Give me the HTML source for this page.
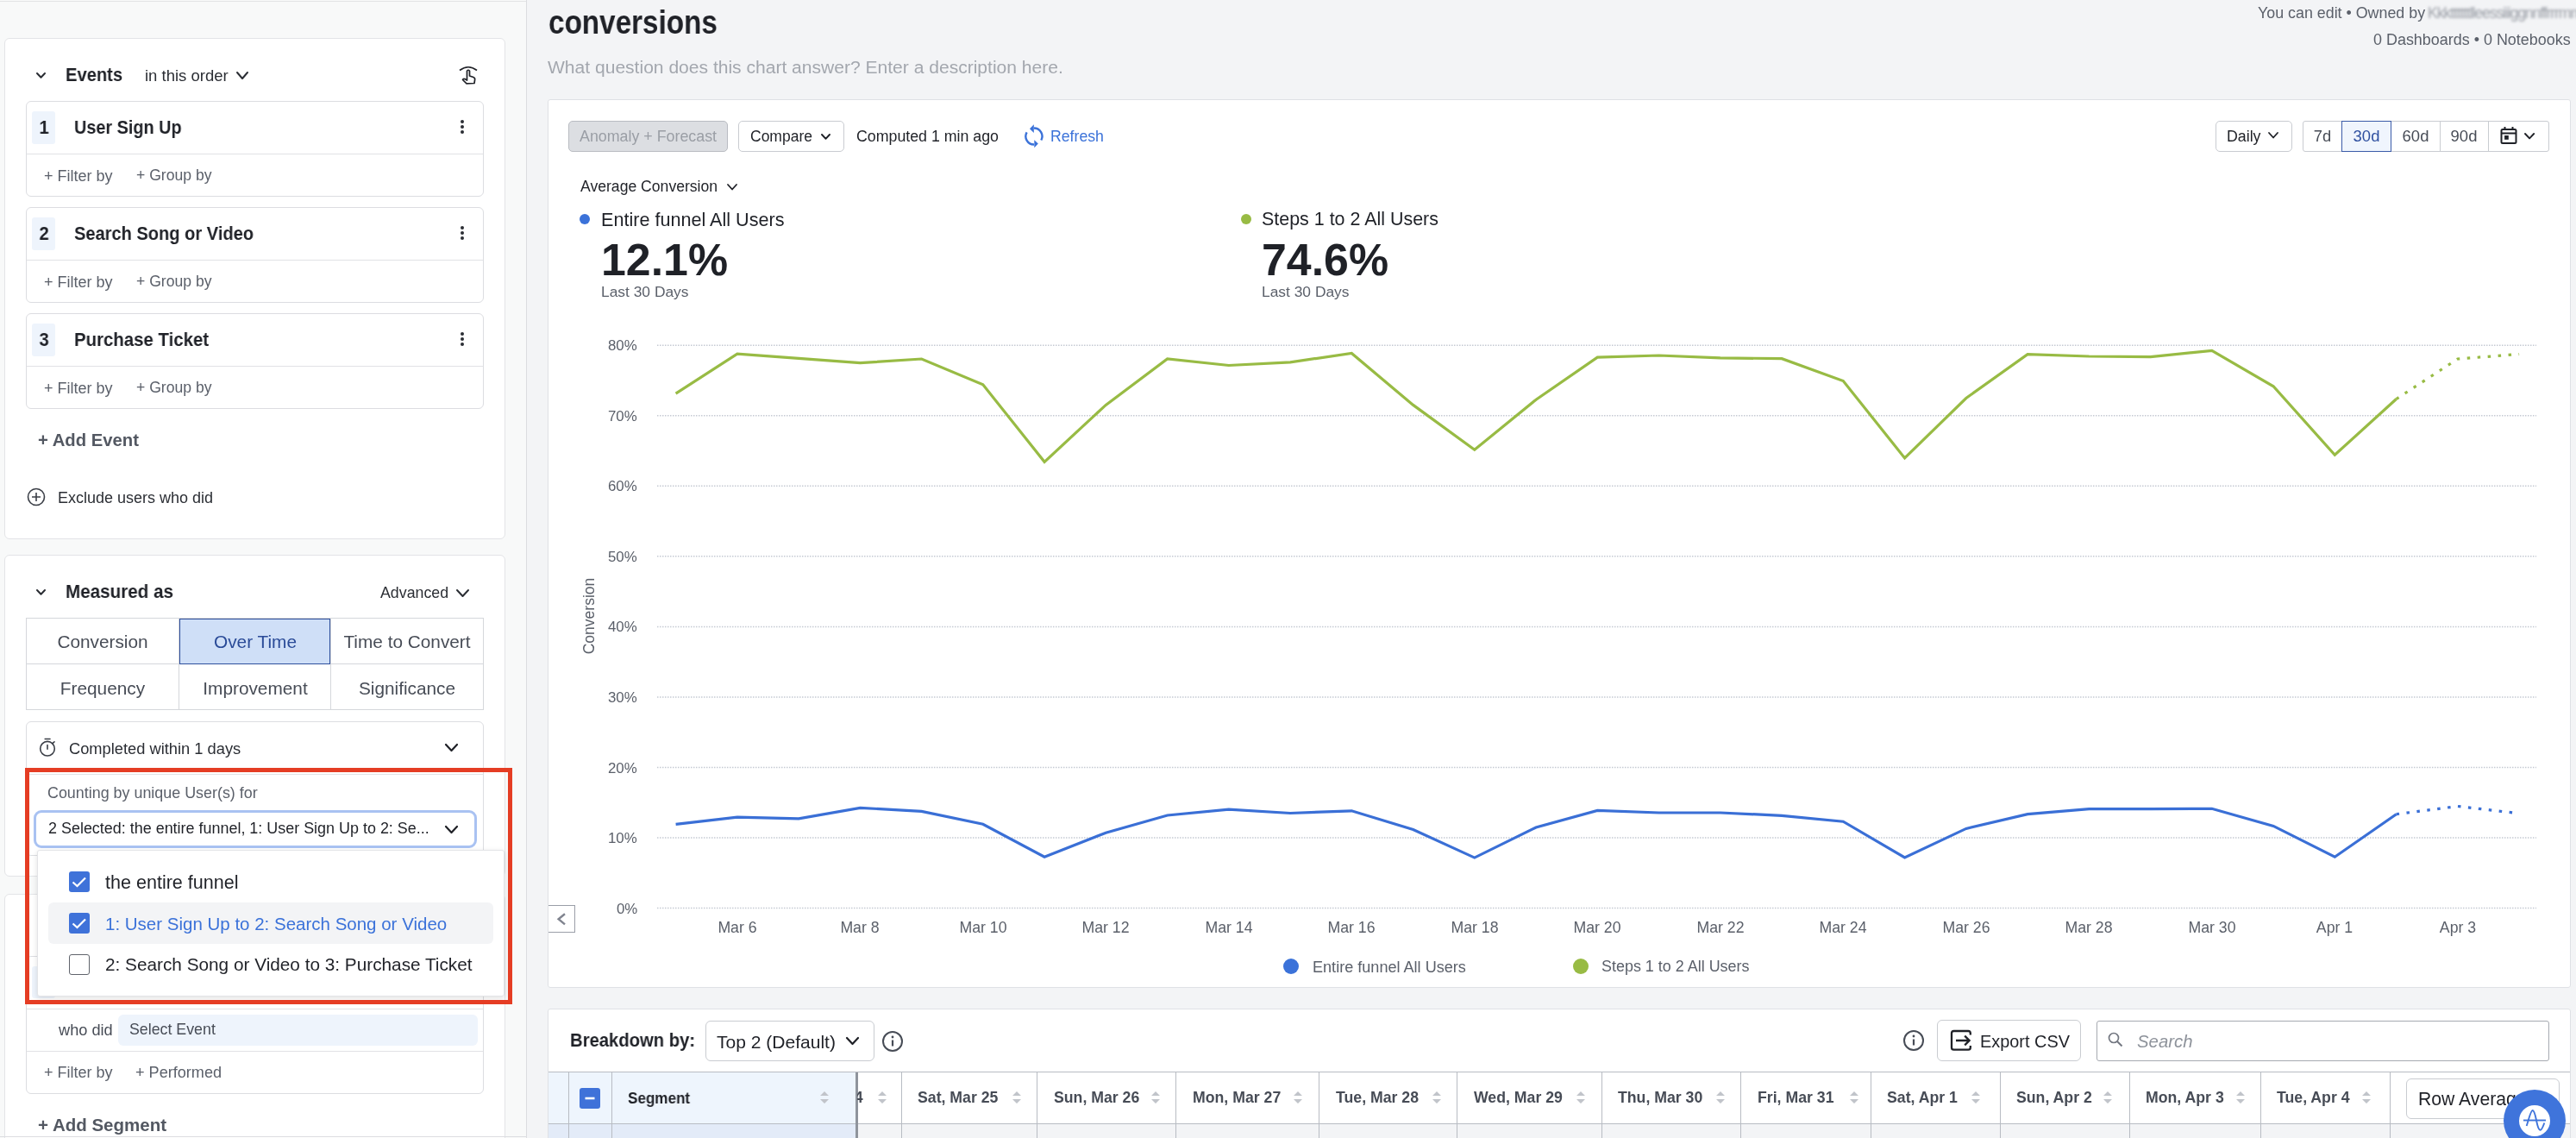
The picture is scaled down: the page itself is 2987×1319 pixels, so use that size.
<!DOCTYPE html><html><head><meta charset="utf-8"><style>
html,body{margin:0;padding:0;}
body{width:2987px;height:1319px;overflow:hidden;position:relative;background:#f3f4f6;font-family:"Liberation Sans", sans-serif;}
.t{position:absolute;white-space:nowrap;will-change:transform;}
.b{position:absolute;box-sizing:border-box;}
</style></head><body>
<div class="b" style="left:0px;top:0px;width:611px;height:1319px;background:#f8f9f9;border-right:1px solid #dcdde0;"></div>
<div class="b" style="left:0px;top:1px;width:610px;height:1px;background:#e2e3e5;"></div>
<div class="b" style="left:5px;top:44px;width:581px;height:581px;background:#fff;border:1px solid #e3e4e7;border-radius:6px;"></div>
<svg class="b" style="left:41.0px;top:82.6px" width="13" height="8.8" viewBox="0 0 13 8.8"><path d="M2 2 L6.5 6.8 L11 2" fill="none" stroke="#2b2e34" stroke-width="2" stroke-linecap="round" stroke-linejoin="round"/></svg>
<div class="t" style="left:76.0px;top:75.7px;font-size:22px;line-height:22px;color:#1f2127;font-weight:bold;transform:scaleX(0.915);transform-origin:0 0;">Events</div>
<div class="t" style="left:168.0px;top:78.6px;font-size:18.5px;line-height:18.5px;color:#2b2e34;">in this order</div>
<svg class="b" style="left:272.5px;top:81.5px" width="16" height="11" viewBox="0 0 16 11"><path d="M2 2 L8.0 9 L14 2" fill="none" stroke="#2b2e34" stroke-width="2" stroke-linecap="round" stroke-linejoin="round"/></svg>
<svg class="b" style="left:530px;top:73px" width="26" height="28" viewBox="0 0 26 28"><path d="M3 8.5 Q13 1 23 8.5" fill="none" stroke="#1f2127" stroke-width="1.6"/><path d="M11.5 20 L11.5 9.2 Q13 7.3 14.5 9.2 L14.5 15 L19 16.5 Q21 17.3 20.6 19.5 L20 23.5 L11 23.8 L6.5 19.5 Q7 18 9 18.6 Z" fill="#fff" stroke="#1f2127" stroke-width="1.7" stroke-linejoin="round"/></svg>
<div class="b" style="left:30px;top:117px;width:531px;height:111px;background:#fff;border:1px solid #dcdde1;border-radius:6px;"></div>
<div class="b" style="left:31px;top:178px;width:529px;height:1px;background:#e1e2e5;"></div>
<div class="b" style="left:37px;top:129px;width:27px;height:38px;background:#eef4fc;border-radius:3px;"></div>
<div class="t" style="left:-249.5px;width:600px;text-align:center;top:137.2px;font-size:22px;line-height:22px;color:#1f2127;font-weight:bold;transform:scaleX(0.92);transform-origin:50% 0;">1</div>
<div class="t" style="left:86.4px;top:136.8px;font-size:22.5px;line-height:22.5px;color:#1f2127;font-weight:bold;transform:scaleX(0.882);transform-origin:0 0;">User Sign Up</div>
<div class="b" style="left:534px;top:139px;width:4px;height:4px;border-radius:2px;background:#2b2e34"></div>
<div class="b" style="left:534px;top:145px;width:4px;height:4px;border-radius:2px;background:#2b2e34"></div>
<div class="b" style="left:534px;top:151px;width:4px;height:4px;border-radius:2px;background:#2b2e34"></div>
<div class="t" style="left:50.5px;top:194.6px;font-size:18px;line-height:18px;color:#5b606a;">+ Filter by</div>
<div class="t" style="left:157.5px;top:194.9px;font-size:17.6px;line-height:17.6px;color:#5b606a;">+ Group by</div>
<div class="b" style="left:30px;top:240px;width:531px;height:111px;background:#fff;border:1px solid #dcdde1;border-radius:6px;"></div>
<div class="b" style="left:31px;top:301px;width:529px;height:1px;background:#e1e2e5;"></div>
<div class="b" style="left:37px;top:252px;width:27px;height:38px;background:#eef4fc;border-radius:3px;"></div>
<div class="t" style="left:-249.5px;width:600px;text-align:center;top:260.2px;font-size:22px;line-height:22px;color:#1f2127;font-weight:bold;transform:scaleX(0.92);transform-origin:50% 0;">2</div>
<div class="t" style="left:86.4px;top:259.8px;font-size:22.5px;line-height:22.5px;color:#1f2127;font-weight:bold;transform:scaleX(0.891);transform-origin:0 0;">Search Song or Video</div>
<div class="b" style="left:534px;top:262px;width:4px;height:4px;border-radius:2px;background:#2b2e34"></div>
<div class="b" style="left:534px;top:268px;width:4px;height:4px;border-radius:2px;background:#2b2e34"></div>
<div class="b" style="left:534px;top:274px;width:4px;height:4px;border-radius:2px;background:#2b2e34"></div>
<div class="t" style="left:50.5px;top:317.6px;font-size:18px;line-height:18px;color:#5b606a;">+ Filter by</div>
<div class="t" style="left:157.5px;top:317.9px;font-size:17.6px;line-height:17.6px;color:#5b606a;">+ Group by</div>
<div class="b" style="left:30px;top:363px;width:531px;height:111px;background:#fff;border:1px solid #dcdde1;border-radius:6px;"></div>
<div class="b" style="left:31px;top:424px;width:529px;height:1px;background:#e1e2e5;"></div>
<div class="b" style="left:37px;top:375px;width:27px;height:38px;background:#eef4fc;border-radius:3px;"></div>
<div class="t" style="left:-249.5px;width:600px;text-align:center;top:383.2px;font-size:22px;line-height:22px;color:#1f2127;font-weight:bold;transform:scaleX(0.92);transform-origin:50% 0;">3</div>
<div class="t" style="left:86.4px;top:382.8px;font-size:22.5px;line-height:22.5px;color:#1f2127;font-weight:bold;transform:scaleX(0.906);transform-origin:0 0;">Purchase Ticket</div>
<div class="b" style="left:534px;top:385px;width:4px;height:4px;border-radius:2px;background:#2b2e34"></div>
<div class="b" style="left:534px;top:391px;width:4px;height:4px;border-radius:2px;background:#2b2e34"></div>
<div class="b" style="left:534px;top:397px;width:4px;height:4px;border-radius:2px;background:#2b2e34"></div>
<div class="t" style="left:50.5px;top:440.6px;font-size:18px;line-height:18px;color:#5b606a;">+ Filter by</div>
<div class="t" style="left:157.5px;top:440.9px;font-size:17.6px;line-height:17.6px;color:#5b606a;">+ Group by</div>
<div class="t" style="left:44.0px;top:499.6px;font-size:20.3px;line-height:20.3px;color:#535862;font-weight:bold;">+ Add Event</div>
<svg class="b" style="left:30px;top:564px" width="24" height="24" viewBox="0 0 24 24"><circle cx="12" cy="12" r="9.5" fill="none" stroke="#3a3e46" stroke-width="1.6"/><path d="M12 7v10M7 12h10" stroke="#3a3e46" stroke-width="1.6"/></svg>
<div class="t" style="left:67.4px;top:567.8px;font-size:18px;line-height:18px;color:#2b2e34;">Exclude users who did</div>
<div class="b" style="left:5px;top:643px;width:581px;height:373px;background:#fff;border:1px solid #e3e4e7;border-radius:6px;"></div>
<svg class="b" style="left:41.0px;top:681.6px" width="13" height="8.8" viewBox="0 0 13 8.8"><path d="M2 2 L6.5 6.8 L11 2" fill="none" stroke="#2b2e34" stroke-width="2" stroke-linecap="round" stroke-linejoin="round"/></svg>
<div class="t" style="left:76.2px;top:675.3px;font-size:22.5px;line-height:22.5px;color:#1f2127;font-weight:bold;transform:scaleX(0.917);transform-origin:0 0;">Measured as</div>
<div class="t" style="left:441.3px;top:679.2px;font-size:17.8px;line-height:17.8px;color:#2b2e34;">Advanced</div>
<svg class="b" style="left:528.0px;top:681.5px" width="17" height="11" viewBox="0 0 17 11"><path d="M2 2 L8.5 9 L15 2" fill="none" stroke="#2b2e34" stroke-width="2" stroke-linecap="round" stroke-linejoin="round"/></svg>
<div class="b" style="left:30px;top:716px;width:531px;height:107px;background:#fff;border:1px solid #d5d7db;"></div>
<div class="b" style="left:31px;top:769px;width:529px;height:1px;background:#d5d7db;"></div>
<div class="b" style="left:207px;top:717px;width:1px;height:105px;background:#d5d7db;"></div>
<div class="b" style="left:383px;top:717px;width:1px;height:105px;background:#d5d7db;"></div>
<div class="b" style="left:208px;top:717px;width:175px;height:53px;background:#cfdff7;border:1px solid #2e4f9c;"></div>
<div class="t" style="left:-181.0px;width:600px;text-align:center;top:734.2px;font-size:20.8px;line-height:20.8px;color:#474c56;">Conversion</div>
<div class="t" style="left:-4.5px;width:600px;text-align:center;top:734.2px;font-size:20.8px;line-height:20.8px;color:#2a4b98;">Over Time</div>
<div class="t" style="left:172.0px;width:600px;text-align:center;top:734.2px;font-size:20.8px;line-height:20.8px;color:#474c56;">Time to Convert</div>
<div class="t" style="left:-181.0px;width:600px;text-align:center;top:787.7px;font-size:20.8px;line-height:20.8px;color:#474c56;">Frequency</div>
<div class="t" style="left:-4.5px;width:600px;text-align:center;top:787.7px;font-size:20.8px;line-height:20.8px;color:#474c56;">Improvement</div>
<div class="t" style="left:172.0px;width:600px;text-align:center;top:787.7px;font-size:20.8px;line-height:20.8px;color:#474c56;">Significance</div>
<div class="b" style="left:30px;top:836px;width:531px;height:156px;background:#fff;border:1px solid #dcdde1;border-radius:6px;"></div>
<div class="b" style="left:31px;top:897px;width:529px;height:1px;background:#e1e2e5;"></div>
<svg class="b" style="left:44px;top:855px" width="24" height="26" viewBox="0 0 24 26"><circle cx="11" cy="12.7" r="8.3" fill="none" stroke="#3a3e46" stroke-width="1.6"/><path d="M8.2 1.5h5.8M11 8.5v4.8M16.6 6.8L19 4.8" stroke="#3a3e46" stroke-width="1.6" stroke-linecap="round"/></svg>
<div class="t" style="left:80.4px;top:859.3px;font-size:18.3px;line-height:18.3px;color:#2b2e34;">Completed within 1 days</div>
<svg class="b" style="left:514.5px;top:861.0px" width="17" height="11" viewBox="0 0 17 11"><path d="M2 2 L8.5 9 L15 2" fill="none" stroke="#1f2127" stroke-width="2.2" stroke-linecap="round" stroke-linejoin="round"/></svg>
<div class="t" style="left:55.4px;top:911.1px;font-size:17.9px;line-height:17.9px;color:#5b606a;">Counting by unique User(s) for</div>
<div class="b" style="left:39px;top:939px;width:514px;height:44px;background:#fff;border:3px solid #a9c2f2;border-radius:9px;"></div>
<div class="t" style="left:56.3px;top:952.1px;font-size:17.95px;line-height:17.95px;color:#1f2127;">2 Selected: the entire funnel, 1: User Sign Up to 2: Se...</div>
<svg class="b" style="left:514.5px;top:955.5px" width="17" height="11" viewBox="0 0 17 11"><path d="M2 2 L8.5 9 L15 2" fill="none" stroke="#1f2127" stroke-width="2.2" stroke-linecap="round" stroke-linejoin="round"/></svg>
<div class="b" style="left:5px;top:1036px;width:581px;height:294px;background:#fff;border:1px solid #e3e4e7;border-radius:6px;"></div>
<div class="b" style="left:30px;top:1108px;width:531px;height:160px;background:#fff;border:1px solid #dcdde1;border-radius:6px;"></div>
<div class="b" style="left:37px;top:1120px;width:27px;height:37px;background:#eef4fc;border-radius:3px;"></div>
<div class="b" style="left:31px;top:1169px;width:529px;height:1px;background:#e1e2e5;"></div>
<div class="b" style="left:31px;top:1218px;width:529px;height:1px;background:#e1e2e5;"></div>
<div class="b" style="left:137px;top:1176px;width:417px;height:36px;background:#eef4fc;border-radius:6px;"></div>
<div class="t" style="left:67.6px;top:1184.9px;font-size:18.2px;line-height:18.2px;color:#474c56;">who did</div>
<div class="t" style="left:150.3px;top:1185.2px;font-size:17.8px;line-height:17.8px;color:#474c56;">Select Event</div>
<div class="t" style="left:50.5px;top:1234.1px;font-size:18px;line-height:18px;color:#5b606a;">+ Filter by</div>
<div class="t" style="left:157.0px;top:1234.0px;font-size:18.1px;line-height:18.1px;color:#5b606a;">+ Performed</div>
<div class="t" style="left:44.0px;top:1293.5px;font-size:20.5px;line-height:20.5px;color:#535862;font-weight:bold;">+ Add Segment</div>
<div class="b" style="left:0px;top:1317px;width:610px;height:1px;background:#dcdde0;"></div>
<div class="b" style="left:43px;top:985px;width:542px;height:170px;background:#fff;border:1px solid #e3e4e7;border-radius:3px;box-shadow:0 2px 6px rgba(0,0,0,0.12);"></div>
<div class="b" style="left:56px;top:1046px;width:516px;height:48px;background:#f3f4f6;border-radius:6px;"></div>
<svg class="b" style="left:80px;top:1010px" width="24" height="24" viewBox="0 0 24 24"><rect x="0" y="0" width="24" height="24" rx="3" fill="#3f72d9"/><path d="M4.5 12.5 L9.5 17 L19 7.5" fill="none" stroke="#fff" stroke-width="2.2"/></svg>
<svg class="b" style="left:80px;top:1058px" width="24" height="24" viewBox="0 0 24 24"><rect x="0" y="0" width="24" height="24" rx="3" fill="#3f72d9"/><path d="M4.5 12.5 L9.5 17 L19 7.5" fill="none" stroke="#fff" stroke-width="2.2"/></svg>
<div class="b" style="left:80px;top:1106px;width:24px;height:24px;background:#fff;border:1.3px solid #60646c;border-radius:3px;"></div>
<div class="t" style="left:122.4px;top:1011.6px;font-size:21.56px;line-height:21.56px;color:#1f2127;">the entire funnel</div>
<div class="t" style="left:122.4px;top:1060.5px;font-size:20.5px;line-height:20.5px;color:#3b72d9;">1: User Sign Up to 2: Search Song or Video</div>
<div class="t" style="left:122.4px;top:1108.3px;font-size:20.78px;line-height:20.78px;color:#1f2127;">2: Search Song or Video to 3: Purchase Ticket</div>
<div class="b" style="left:29px;top:890px;width:565px;height:274px;border:5px solid #e53d24;"></div>
<div class="t" style="left:636.0px;top:6.7px;font-size:38px;line-height:38px;color:#1f2127;font-weight:bold;transform:scaleX(0.875);transform-origin:0 0;">conversions</div>
<div class="t" style="left:635.0px;top:66.5px;font-size:21.05px;line-height:21.05px;color:#a3a7ae;">What question does this chart answer? Enter a description here.</div>
<div class="t" style="left:2618.0px;top:7.4px;font-size:17.85px;line-height:17.85px;color:#5b606a;">You can edit • Owned by</div>
<div class="t" style="left:2815.0px;top:7.4px;font-size:17.85px;line-height:17.85px;color:#9a9ea6;filter:blur(1.4px);letter-spacing:-1.2px;">Kkkttttttlleessiiiggnnffrrrmmnntttt</div>
<div class="t" style="right:6.3px;top:37.7px;font-size:17.97px;line-height:17.97px;color:#5b606a;">0 Dashboards • 0 Notebooks</div>
<div class="b" style="left:635px;top:115px;width:2346px;height:1030px;background:#fff;border:1px solid #dfe1e5;border-radius:3px;"></div>
<div class="b" style="left:659px;top:140px;width:185px;height:36px;background:#dcdee2;border:1px solid #b9bcc2;border-radius:5px;"></div>
<div class="t" style="left:672.0px;top:150.0px;font-size:17.83px;line-height:17.83px;color:#9a9ea5;">Anomaly + Forecast</div>
<div class="b" style="left:856px;top:140px;width:123px;height:36px;background:#fff;border:1px solid #c9ccd1;border-radius:5px;"></div>
<div class="t" style="left:869.8px;top:150.3px;font-size:17.5px;line-height:17.5px;color:#1f2127;">Compare</div>
<svg class="b" style="left:950.9px;top:153.6px" width="13" height="8.8" viewBox="0 0 13 8.8"><path d="M2 2 L6.5 6.8 L11 2" fill="none" stroke="#1f2127" stroke-width="1.9" stroke-linecap="round" stroke-linejoin="round"/></svg>
<div class="t" style="left:992.7px;top:150.0px;font-size:17.78px;line-height:17.78px;color:#1f2127;">Computed 1 min ago</div>
<svg class="b" style="left:1186px;top:143px" width="26" height="32" viewBox="0 0 26 32"><path d="M13 5.5 A9.5 9.5 0 0 1 21.3 19.5" fill="none" stroke="#3b72d9" stroke-width="2.4"/><path d="M8 6.2 L12.8 1.2 L12.8 11 Z" fill="#3b72d9"/><path d="M13 24.5 A9.5 9.5 0 0 1 4.6 10.3" fill="none" stroke="#3b72d9" stroke-width="2.4"/><path d="M17.8 23.6 L13.3 19.2 L13.3 28.2 Z" fill="#3b72d9"/></svg>
<div class="t" style="left:1218.0px;top:150.1px;font-size:17.7px;line-height:17.7px;color:#3b72d9;">Refresh</div>
<div class="b" style="left:2569px;top:140px;width:89px;height:36px;background:#fff;border:1px solid #c9ccd1;border-radius:5px;"></div>
<div class="t" style="left:2582.0px;top:150.1px;font-size:17.77px;line-height:17.77px;color:#1f2127;">Daily</div>
<svg class="b" style="left:2629.3px;top:152.25px" width="14" height="9.5" viewBox="0 0 14 9.5"><path d="M2 2 L7.0 7.5 L12 2" fill="none" stroke="#1f2127" stroke-width="1.8" stroke-linecap="round" stroke-linejoin="round"/></svg>
<div class="b" style="left:2670px;top:140px;width:286px;height:36px;background:#fff;border:1px solid #c9ccd1;border-radius:3px;"></div>
<div class="b" style="left:2715px;top:141px;width:1px;height:34px;background:#c9ccd1;"></div>
<div class="b" style="left:2772px;top:141px;width:1px;height:34px;background:#c9ccd1;"></div>
<div class="b" style="left:2829px;top:141px;width:1px;height:34px;background:#c9ccd1;"></div>
<div class="b" style="left:2885px;top:141px;width:1px;height:34px;background:#c9ccd1;"></div>
<div class="b" style="left:2715px;top:140px;width:58px;height:36px;background:#f0f5fd;border:1.5px solid #3b5ba8;"></div>
<div class="t" style="left:2393.0px;width:600px;text-align:center;top:148.7px;font-size:18.4px;line-height:18.4px;color:#474c56;">7d</div>
<div class="t" style="left:2444.0px;width:600px;text-align:center;top:148.6px;font-size:18.5px;line-height:18.5px;color:#2f50a0;">30d</div>
<div class="t" style="left:2500.5px;width:600px;text-align:center;top:148.6px;font-size:18.5px;line-height:18.5px;color:#474c56;">60d</div>
<div class="t" style="left:2557.0px;width:600px;text-align:center;top:148.6px;font-size:18.5px;line-height:18.5px;color:#474c56;">90d</div>
<svg class="b" style="left:2899px;top:146px" width="20" height="22" viewBox="0 0 20 22"><rect x="1.5" y="4" width="17" height="16" rx="1.5" fill="none" stroke="#1f2127" stroke-width="2"/><path d="M1.5 8.5h17" stroke="#1f2127" stroke-width="2"/><path d="M5.5 1v4M14.5 1v4" stroke="#1f2127" stroke-width="2"/><rect x="5.1" y="11" width="4.7" height="4.8" fill="#1f2127"/></svg>
<svg class="b" style="left:2926.3px;top:153.3px" width="14.2" height="9.4" viewBox="0 0 14.2 9.4"><path d="M2 2 L7.1 7.4 L12.2 2" fill="none" stroke="#1f2127" stroke-width="1.9" stroke-linecap="round" stroke-linejoin="round"/></svg>
<div class="t" style="left:673.0px;top:208.4px;font-size:17.6px;line-height:17.6px;color:#1f2127;">Average Conversion</div>
<svg class="b" style="left:841.5px;top:212.25px" width="14" height="9.5" viewBox="0 0 14 9.5"><path d="M2 2 L7.0 7.5 L12 2" fill="none" stroke="#1f2127" stroke-width="1.8" stroke-linecap="round" stroke-linejoin="round"/></svg>
<div class="b" style="left:672px;top:248px;width:12px;height:12px;border-radius:6px;background:#3b72d9"></div>
<div class="t" style="left:697.0px;top:244.1px;font-size:21.6px;line-height:21.6px;color:#1f2127;">Entire funnel All Users</div>
<div class="t" style="left:697.0px;top:275.8px;font-size:51.85px;line-height:51.85px;color:#1f2127;font-weight:bold;">12.1%</div>
<div class="t" style="left:697.0px;top:330.0px;font-size:17.4px;line-height:17.4px;color:#5b606a;">Last 30 Days</div>
<div class="b" style="left:1439px;top:248px;width:12px;height:12px;border-radius:6px;background:#98bb44"></div>
<div class="t" style="left:1463.0px;top:244.2px;font-size:21.44px;line-height:21.44px;color:#1f2127;">Steps 1 to 2 All Users</div>
<div class="t" style="left:1463.0px;top:275.8px;font-size:51.85px;line-height:51.85px;color:#1f2127;font-weight:bold;">74.6%</div>
<div class="t" style="left:1463.0px;top:330.0px;font-size:17.4px;line-height:17.4px;color:#5b606a;">Last 30 Days</div>
<svg class="b" style="left:0;top:0" width="2987" height="1319" viewBox="0 0 2987 1319"><line x1="762" y1="1052.6" x2="2941" y2="1052.6" stroke="#c5cad3" stroke-width="1.5" stroke-dasharray="1.5 1.5"/><line x1="762" y1="971.05" x2="2941" y2="971.05" stroke="#c5cad3" stroke-width="1.5" stroke-dasharray="1.5 1.5"/><line x1="762" y1="889.4999999999999" x2="2941" y2="889.4999999999999" stroke="#c5cad3" stroke-width="1.5" stroke-dasharray="1.5 1.5"/><line x1="762" y1="807.9499999999999" x2="2941" y2="807.9499999999999" stroke="#c5cad3" stroke-width="1.5" stroke-dasharray="1.5 1.5"/><line x1="762" y1="726.3999999999999" x2="2941" y2="726.3999999999999" stroke="#c5cad3" stroke-width="1.5" stroke-dasharray="1.5 1.5"/><line x1="762" y1="644.8499999999999" x2="2941" y2="644.8499999999999" stroke="#c5cad3" stroke-width="1.5" stroke-dasharray="1.5 1.5"/><line x1="762" y1="563.3" x2="2941" y2="563.3" stroke="#c5cad3" stroke-width="1.5" stroke-dasharray="1.5 1.5"/><line x1="762" y1="481.7499999999999" x2="2941" y2="481.7499999999999" stroke="#c5cad3" stroke-width="1.5" stroke-dasharray="1.5 1.5"/><line x1="762" y1="400.19999999999993" x2="2941" y2="400.19999999999993" stroke="#c5cad3" stroke-width="1.5" stroke-dasharray="1.5 1.5"/><polyline points="783.6,456.1 854.9,410.1 926.1,415.4 997.4,420.7 1068.6,416.0 1139.8,445.8 1211.1,535.3 1282.3,469.4 1353.6,416.0 1424.8,423.5 1496.1,419.8 1567.3,409.5 1638.6,469.4 1709.8,521.3 1781.1,463.2 1852.3,414.2 1923.6,412.0 1994.8,414.8 2066.1,415.7 2137.3,441.5 2208.6,530.9 2279.8,461.5 2351.1,410.6 2422.3,413.0 2493.6,413.6 2564.8,406.3 2636.1,447.8 2707.3,527.3 2778.6,462.5" fill="none" stroke="#98bb44" stroke-width="3.2" stroke-linejoin="miter"/><polyline points="2778.6,462.5 2849.8,416.0 2921.1,410.5" fill="none" stroke="#98bb44" stroke-width="3.2" stroke-dasharray="3.5 8.5"/><polyline points="783.6,955.3 854.9,947.2 926.1,948.8 997.4,936.3 1068.6,940.4 1139.8,955.3 1211.1,993.2 1282.3,965.2 1353.6,945.0 1424.8,938.2 1496.1,942.5 1567.3,939.8 1638.6,961.5 1709.8,994.1 1781.1,959.0 1852.3,939.4 1923.6,942.0 1994.8,942.0 2066.1,945.3 2137.3,952.2 2208.6,994.0 2279.8,960.4 2351.1,943.7 2422.3,937.6 2493.6,937.6 2564.8,937.3 2636.1,957.4 2707.3,993.2 2778.6,943.7" fill="none" stroke="#3a6fd6" stroke-width="3.2" stroke-linejoin="miter"/><polyline points="2778.6,943.7 2849.8,934.5 2921.1,942.8" fill="none" stroke="#3a6fd6" stroke-width="3.2" stroke-dasharray="3.5 8.5"/></svg>
<div class="t" style="right:2248.0px;top:1045.6px;font-size:16.85px;line-height:16.85px;color:#5b606a;">0%</div>
<div class="t" style="right:2248.0px;top:964.1px;font-size:16.85px;line-height:16.85px;color:#5b606a;">10%</div>
<div class="t" style="right:2248.0px;top:882.5px;font-size:16.85px;line-height:16.85px;color:#5b606a;">20%</div>
<div class="t" style="right:2248.0px;top:801.0px;font-size:16.85px;line-height:16.85px;color:#5b606a;">30%</div>
<div class="t" style="right:2248.0px;top:719.4px;font-size:16.85px;line-height:16.85px;color:#5b606a;">40%</div>
<div class="t" style="right:2248.0px;top:637.9px;font-size:16.85px;line-height:16.85px;color:#5b606a;">50%</div>
<div class="t" style="right:2248.0px;top:556.3px;font-size:16.85px;line-height:16.85px;color:#5b606a;">60%</div>
<div class="t" style="right:2248.0px;top:474.8px;font-size:16.85px;line-height:16.85px;color:#5b606a;">70%</div>
<div class="t" style="right:2248.0px;top:393.2px;font-size:16.85px;line-height:16.85px;color:#5b606a;">80%</div>
<div class="t" style="left:623px;top:704.5px;width:120px;text-align:center;font-size:17.5px;line-height:18px;color:#5b606a;transform:rotate(-90deg);transform-origin:50% 50%;">Conversion</div>
<div class="t" style="left:554.9px;width:600px;text-align:center;top:1067.0px;font-size:17.7px;line-height:17.7px;color:#5b606a;">Mar 6</div>
<div class="t" style="left:697.4px;width:600px;text-align:center;top:1067.0px;font-size:17.7px;line-height:17.7px;color:#5b606a;">Mar 8</div>
<div class="t" style="left:839.8px;width:600px;text-align:center;top:1067.0px;font-size:17.7px;line-height:17.7px;color:#5b606a;">Mar 10</div>
<div class="t" style="left:982.3px;width:600px;text-align:center;top:1067.0px;font-size:17.7px;line-height:17.7px;color:#5b606a;">Mar 12</div>
<div class="t" style="left:1124.8px;width:600px;text-align:center;top:1067.0px;font-size:17.7px;line-height:17.7px;color:#5b606a;">Mar 14</div>
<div class="t" style="left:1267.3px;width:600px;text-align:center;top:1067.0px;font-size:17.7px;line-height:17.7px;color:#5b606a;">Mar 16</div>
<div class="t" style="left:1409.8px;width:600px;text-align:center;top:1067.0px;font-size:17.7px;line-height:17.7px;color:#5b606a;">Mar 18</div>
<div class="t" style="left:1552.3px;width:600px;text-align:center;top:1067.0px;font-size:17.7px;line-height:17.7px;color:#5b606a;">Mar 20</div>
<div class="t" style="left:1694.8px;width:600px;text-align:center;top:1067.0px;font-size:17.7px;line-height:17.7px;color:#5b606a;">Mar 22</div>
<div class="t" style="left:1837.3px;width:600px;text-align:center;top:1067.0px;font-size:17.7px;line-height:17.7px;color:#5b606a;">Mar 24</div>
<div class="t" style="left:1979.8px;width:600px;text-align:center;top:1067.0px;font-size:17.7px;line-height:17.7px;color:#5b606a;">Mar 26</div>
<div class="t" style="left:2122.3px;width:600px;text-align:center;top:1067.0px;font-size:17.7px;line-height:17.7px;color:#5b606a;">Mar 28</div>
<div class="t" style="left:2264.8px;width:600px;text-align:center;top:1067.0px;font-size:17.7px;line-height:17.7px;color:#5b606a;">Mar 30</div>
<div class="t" style="left:2407.3px;width:600px;text-align:center;top:1067.0px;font-size:17.7px;line-height:17.7px;color:#5b606a;">Apr 1</div>
<div class="t" style="left:2549.8px;width:600px;text-align:center;top:1067.0px;font-size:17.7px;line-height:17.7px;color:#5b606a;">Apr 3</div>
<div class="b" style="left:636px;top:1049px;width:31px;height:32px;background:#fff;border:1px solid #9a9ea8;border-left:none;"></div>
<svg class="b" style="left:645px;top:1057.5px" width="14" height="15" viewBox="0 0 14 15"><path d="M10 1.2 L2.6 7.3 L10 13.4" fill="none" stroke="#80848f" stroke-width="2.4"/></svg>
<div class="b" style="left:1488px;top:1111px;width:18px;height:18px;border-radius:9px;background:#3b72d9"></div>
<div class="t" style="left:1521.5px;top:1111.5px;font-size:18.09px;line-height:18.09px;color:#5b606a;">Entire funnel All Users</div>
<div class="b" style="left:1824px;top:1111px;width:18px;height:18px;border-radius:9px;background:#98bb44"></div>
<div class="t" style="left:1856.5px;top:1111.6px;font-size:17.94px;line-height:17.94px;color:#5b606a;">Steps 1 to 2 All Users</div>
<div class="b" style="left:635px;top:1169px;width:2346px;height:171px;background:#fff;border:1px solid #dfe1e5;border-radius:3px;"></div>
<div class="t" style="left:660.8px;top:1196.3px;font-size:21.3px;line-height:21.3px;color:#1f2127;font-weight:bold;transform:scaleX(0.95);transform-origin:0 0;">Breakdown by:</div>
<div class="b" style="left:818px;top:1182.5px;width:196px;height:47.5px;background:#fff;border:1px solid #c9ccd1;border-radius:6px;"></div>
<div class="t" style="left:831.4px;top:1196.5px;font-size:21.04px;line-height:21.04px;color:#1f2127;">Top 2 (Default)</div>
<svg class="b" style="left:980.0px;top:1200.5px" width="17" height="11" viewBox="0 0 17 11"><path d="M2 2 L8.5 9 L15 2" fill="none" stroke="#1f2127" stroke-width="2.2" stroke-linecap="round" stroke-linejoin="round"/></svg>
<svg class="b" style="left:1022px;top:1193.6px" width="26" height="26" viewBox="0 0 26 26"><circle cx="13" cy="13" r="11" fill="none" stroke="#474c56" stroke-width="2"/><path d="M13 11.5v7" stroke="#474c56" stroke-width="2.2"/><circle cx="13" cy="8" r="1.4" fill="#474c56"/></svg>
<svg class="b" style="left:2206px;top:1193px" width="26" height="26" viewBox="0 0 26 26"><circle cx="13" cy="13" r="11" fill="none" stroke="#474c56" stroke-width="2"/><path d="M13 11.5v7" stroke="#474c56" stroke-width="2.2"/><circle cx="13" cy="8" r="1.4" fill="#474c56"/></svg>
<div class="b" style="left:2246px;top:1182px;width:167px;height:48px;background:#fff;border:1px solid #c9ccd1;border-radius:6px;"></div>
<svg class="b" style="left:2261px;top:1193px" width="26" height="26" viewBox="0 0 26 26"><path d="M23.8 6.5 V4.5 Q23.8 2 21.3 2 H4.5 Q2 2 2 4.5 V21.3 Q2 23.7 4.5 23.7 H21.3 Q23.8 23.7 23.8 21.3 V19" fill="none" stroke="#1f2127" stroke-width="2.3"/><path d="M7 13 H23.2 M17.2 7.6 L22.6 13 L17.2 18.4" fill="none" stroke="#1f2127" stroke-width="2.3"/></svg>
<div class="t" style="left:2295.6px;top:1197.5px;font-size:19.9px;line-height:19.9px;color:#1f2127;">Export CSV</div>
<div class="b" style="left:2431px;top:1183px;width:525px;height:47px;background:#fff;border:1px solid #a6aab1;border-radius:3px;"></div>
<svg class="b" style="left:2443px;top:1195px" width="20" height="20" viewBox="0 0 20 20"><circle cx="8" cy="8" r="5.5" fill="none" stroke="#737781" stroke-width="1.7"/><path d="M12 12 L17.5 17.5" stroke="#737781" stroke-width="1.9"/></svg>
<div class="t" style="left:2478.0px;top:1197.1px;font-size:20.36px;line-height:20.36px;color:#8e939b;font-style:italic;">Search</div>
<div class="b" style="left:636px;top:1242px;width:2344px;height:1px;background:#b8bcc3;"></div>
<div class="b" style="left:636px;top:1243px;width:358px;height:59px;background:#eef5fd;"></div>
<div class="b" style="left:636px;top:1302px;width:2344px;height:1px;background:#b8bcc3;"></div>
<div class="b" style="left:636px;top:1303px;width:358px;height:27px;background:#e3ebf8;"></div>
<div class="b" style="left:994px;top:1303px;width:1986px;height:27px;background:#f3f4f6;"></div>
<div class="b" style="left:659px;top:1243px;width:1px;height:87px;background:#b8bcc3;"></div>
<div class="b" style="left:709px;top:1243px;width:1px;height:87px;background:#b8bcc3;"></div>
<div class="b" style="left:1045px;top:1243px;width:1px;height:87px;background:#b8bcc3;"></div>
<div class="b" style="left:1202px;top:1243px;width:1px;height:87px;background:#b8bcc3;"></div>
<div class="b" style="left:1363px;top:1243px;width:1px;height:87px;background:#b8bcc3;"></div>
<div class="b" style="left:1529px;top:1243px;width:1px;height:87px;background:#b8bcc3;"></div>
<div class="b" style="left:1689px;top:1243px;width:1px;height:87px;background:#b8bcc3;"></div>
<div class="b" style="left:1857px;top:1243px;width:1px;height:87px;background:#b8bcc3;"></div>
<div class="b" style="left:2018px;top:1243px;width:1px;height:87px;background:#b8bcc3;"></div>
<div class="b" style="left:2169px;top:1243px;width:1px;height:87px;background:#b8bcc3;"></div>
<div class="b" style="left:2319px;top:1243px;width:1px;height:87px;background:#b8bcc3;"></div>
<div class="b" style="left:2469px;top:1243px;width:1px;height:87px;background:#b8bcc3;"></div>
<div class="b" style="left:2621px;top:1243px;width:1px;height:87px;background:#b8bcc3;"></div>
<div class="b" style="left:2771px;top:1243px;width:1px;height:87px;background:#b8bcc3;"></div>
<div class="b" style="left:992px;top:1243px;width:3px;height:87px;background:#8f949c;"></div>
<svg class="b" style="left:672px;top:1261px" width="24" height="24" viewBox="0 0 24 24"><rect width="24" height="24" rx="3" fill="#3f72d9"/><path d="M6.5 12h11" stroke="#fff" stroke-width="2.6"/></svg>
<div class="t" style="left:728.0px;top:1264.5px;font-size:17.5px;line-height:17.5px;color:#1f2127;font-weight:bold;transform:scaleX(0.975);transform-origin:0 0;">Segment</div>
<svg class="b" style="left:950px;top:1263px" width="12" height="18" viewBox="0 0 12 18"><path d="M1 7 L6 2 L11 7 Z M1 11 L6 16 L11 11 Z" fill="#c1c4ca"/></svg>
<div class="b" style="left:994px;top:1243px;width:1986px;height:59px;overflow:hidden">
<div class="t" style="left:-82.5px;top:21.3px;font-size:17.7px;line-height:17.7px;color:#474c56;font-weight:bold;">Fri, Mar 24</div>
<div class="t" style="left:70.0px;top:21.3px;font-size:17.7px;line-height:17.7px;color:#474c56;font-weight:bold;">Sat, Mar 25</div>
<div class="t" style="left:227.5px;top:21.3px;font-size:17.7px;line-height:17.7px;color:#474c56;font-weight:bold;">Sun, Mar 26</div>
<div class="t" style="left:388.8px;top:21.3px;font-size:17.7px;line-height:17.7px;color:#474c56;font-weight:bold;">Mon, Mar 27</div>
<div class="t" style="left:555.0px;top:21.3px;font-size:17.7px;line-height:17.7px;color:#474c56;font-weight:bold;">Tue, Mar 28</div>
<div class="t" style="left:714.6px;top:21.3px;font-size:17.7px;line-height:17.7px;color:#474c56;font-weight:bold;">Wed, Mar 29</div>
<div class="t" style="left:882.0px;top:21.3px;font-size:17.7px;line-height:17.7px;color:#474c56;font-weight:bold;">Thu, Mar 30</div>
<div class="t" style="left:1043.6px;top:21.3px;font-size:17.7px;line-height:17.7px;color:#474c56;font-weight:bold;">Fri, Mar 31</div>
<div class="t" style="left:1193.8px;top:21.3px;font-size:17.7px;line-height:17.7px;color:#474c56;font-weight:bold;">Sat, Apr 1</div>
<div class="t" style="left:1343.6px;top:21.3px;font-size:17.7px;line-height:17.7px;color:#474c56;font-weight:bold;">Sun, Apr 2</div>
<div class="t" style="left:1494.0px;top:21.3px;font-size:17.7px;line-height:17.7px;color:#474c56;font-weight:bold;">Mon, Apr 3</div>
<div class="t" style="left:1646.0px;top:21.3px;font-size:17.7px;line-height:17.7px;color:#474c56;font-weight:bold;">Tue, Apr 4</div>
</div>
<svg class="b" style="left:1016.5px;top:1263px" width="12" height="18" viewBox="0 0 12 18"><path d="M1 7 L6 2 L11 7 Z M1 11 L6 16 L11 11 Z" fill="#c1c4ca"/></svg>
<svg class="b" style="left:1172.5px;top:1263px" width="12" height="18" viewBox="0 0 12 18"><path d="M1 7 L6 2 L11 7 Z M1 11 L6 16 L11 11 Z" fill="#c1c4ca"/></svg>
<svg class="b" style="left:1334px;top:1263px" width="12" height="18" viewBox="0 0 12 18"><path d="M1 7 L6 2 L11 7 Z M1 11 L6 16 L11 11 Z" fill="#c1c4ca"/></svg>
<svg class="b" style="left:1499px;top:1263px" width="12" height="18" viewBox="0 0 12 18"><path d="M1 7 L6 2 L11 7 Z M1 11 L6 16 L11 11 Z" fill="#c1c4ca"/></svg>
<svg class="b" style="left:1660px;top:1263px" width="12" height="18" viewBox="0 0 12 18"><path d="M1 7 L6 2 L11 7 Z M1 11 L6 16 L11 11 Z" fill="#c1c4ca"/></svg>
<svg class="b" style="left:1827.3px;top:1263px" width="12" height="18" viewBox="0 0 12 18"><path d="M1 7 L6 2 L11 7 Z M1 11 L6 16 L11 11 Z" fill="#c1c4ca"/></svg>
<svg class="b" style="left:1989px;top:1263px" width="12" height="18" viewBox="0 0 12 18"><path d="M1 7 L6 2 L11 7 Z M1 11 L6 16 L11 11 Z" fill="#c1c4ca"/></svg>
<svg class="b" style="left:2144px;top:1263px" width="12" height="18" viewBox="0 0 12 18"><path d="M1 7 L6 2 L11 7 Z M1 11 L6 16 L11 11 Z" fill="#c1c4ca"/></svg>
<svg class="b" style="left:2285px;top:1263px" width="12" height="18" viewBox="0 0 12 18"><path d="M1 7 L6 2 L11 7 Z M1 11 L6 16 L11 11 Z" fill="#c1c4ca"/></svg>
<svg class="b" style="left:2438px;top:1263px" width="12" height="18" viewBox="0 0 12 18"><path d="M1 7 L6 2 L11 7 Z M1 11 L6 16 L11 11 Z" fill="#c1c4ca"/></svg>
<svg class="b" style="left:2592px;top:1263px" width="12" height="18" viewBox="0 0 12 18"><path d="M1 7 L6 2 L11 7 Z M1 11 L6 16 L11 11 Z" fill="#c1c4ca"/></svg>
<svg class="b" style="left:2738px;top:1263px" width="12" height="18" viewBox="0 0 12 18"><path d="M1 7 L6 2 L11 7 Z M1 11 L6 16 L11 11 Z" fill="#c1c4ca"/></svg>
<div class="b" style="left:2790px;top:1249.5px;width:178px;height:47.5px;background:#fff;border:1px solid #c9ccd1;border-radius:6px;"></div>
<div class="t" style="left:2803.7px;top:1262.9px;font-size:21.2px;line-height:21.2px;color:#1f2127;">Row Average</div>
<svg class="b" style="left:2902px;top:1262px" width="74" height="74" viewBox="0 0 74 74"><defs><filter id="sh" x="-30%" y="-30%" width="160%" height="160%"><feGaussianBlur stdDeviation="0"/></filter></defs><circle cx="37" cy="37" r="36" fill="#3f74db"/><circle cx="37" cy="37" r="18" fill="#fff"/><path d="M24 36.5 H50" stroke="#3f74db" stroke-width="1.9"/><path d="M27.7 43 C30 36 32.5 25 34.7 25 C37.5 25 38.8 37 40.3 42 C41.5 46.5 42.5 47.8 43.6 47.8 C45.5 47.8 47 43 48.3 39.5" fill="none" stroke="#3f74db" stroke-width="1.9"/></svg>
</body></html>
